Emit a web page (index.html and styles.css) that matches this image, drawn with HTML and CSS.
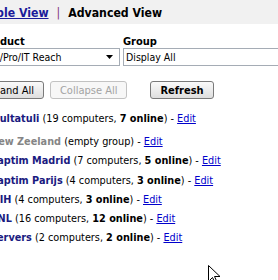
FILE: index.html
```html
<!DOCTYPE html>
<html lang="en">
<head>
    <meta charset="UTF-8">
    <title>Computer Groups</title>
    <link rel="stylesheet" href="styles.css">
</head>
<body>
    <div class="page">
        <div class="viewbar">
            <a href="#" class="viewlink">Simple View</a>
            <span class="sep">|</span>
            <span class="current">Advanced View</span>
        </div>

        <div class="filters">
            <div class="field product">
                <label>Product</label>
                <div class="select">
                    <span>Std/Pro/IT Reach</span>
                    <svg class="arrow" width="7" height="4" viewBox="0 0 7 4"><path d="M0 0h7L3.5 4z" fill="#000"/></svg>
                </div>
            </div>
            <div class="field group">
                <label>Group</label>
                <div class="select">
                    <span>Display All</span>
                </div>
            </div>
        </div>

        <div class="actions">
            <button class="btn">Expand All</button>
            <button class="btn" disabled>Collapse All</button>
            <button class="btn refresh">Refresh</button>
        </div>

        <ul class="groups">
            <li class="first"><span class="name">Multatuli</span> (19 computers, <b>7 online</b>) - <a href="#">Edit</a></li>
            <li><span class="name empty">New Zeeland</span> (empty group) - <a href="#">Edit</a></li>
            <li><span class="name">Captim Madrid</span> (7 computers, <b>5 online</b>) - <a href="#">Edit</a></li>
            <li><span class="name">Captim Parijs</span> (4 computers, <b>3 online</b>) - <a href="#">Edit</a></li>
            <li><span class="name">MIH</span> (4 computers, <b>3 online</b>) - <a href="#">Edit</a></li>
            <li><span class="name">ANL</span> (16 computers, <b>12 online</b>) - <a href="#">Edit</a></li>
            <li><span class="name">Servers</span> (2 computers, <b>2 online</b>) - <a href="#">Edit</a></li>
        </ul>
    </div>

    <svg class="cursor" width="13" height="20" viewBox="0 0 13 20">
        <path d="M0.5 0.5v16l4-4 3 6.5 2-1-3-6.5h5.5z" fill="#fff" stroke="#000" stroke-width="1"/>
    </svg>
</body>
</html>
```

FILE: styles.css
```css
body {
    margin: 0;
    font-family: "DejaVu Sans Condensed", "DejaVu Sans", sans-serif;
    font-size: 10.5px;
    color: #000;
    background: #fff;
    overflow: hidden;
}
.page {
    margin-left: -30px;
}
.viewbar {
    display: flex;
    background: #f1f1f1;
    height: 22px;
    padding: 2px 0 0 3px;
    line-height: 22px;
    font-size: 12.2px;
    font-weight: bold;
    width: 400px;
}
.viewlink {
    color: #1a1a9a;
}
.sep {
    color: #803080;
    font-weight: normal;
    margin: 0 8px 0 8px;
}
.filters {
    display: flex;
    gap: 3px;
    padding: 11px 0 0 11px;
}
.field label {
    display: block;
    font-size: 11px;
    font-weight: bold;
    line-height: 13px;
}
.select {
    display: flex;
    align-items: center;
    box-sizing: border-box;
    height: 18px;
    border: 1px solid #a5acb5;
    padding: 0 2px;
    background: #fff;
}
.product .select {
    width: 139px;
    justify-content: space-between;
}
.group .select {
    width: 200px;
}
.arrow {
    margin-right: 4px;
}
.actions {
    display: flex;
    padding: 15px 0 0 1.5px;
}
.btn {
    box-sizing: border-box;
    font-family: inherit;
    font-size: 11px;
    height: 18px;
    padding: 0 9px;
    margin-right: 6px;
    border: 1px solid #7a7a7a;
    border-radius: 3px;
    background: linear-gradient(#fafafa, #dedede);
    color: #000;
}
.btn:disabled {
    border-color: #c2c2c2;
    background: #f7f7f7;
    color: #a3a3a3;
}
.refresh {
    margin-left: 17px;
    font-weight: bold;
}
.groups {
    list-style: none;
    margin: 0;
    padding: 10px 0 0 20px;
    font-size: 10.8px;
}
.groups li {
    line-height: 19.2px;
    white-space: nowrap;
}
.groups li.first {
    margin-bottom: 4px;
}
.name {
    font-weight: bold;
    color: #1a1a80;
}
.name.empty {
    color: #858585;
}
.groups a {
    color: #0000cc;
}
.cursor {
    position: absolute;
    left: 208px;
    top: 265px;
}
```
